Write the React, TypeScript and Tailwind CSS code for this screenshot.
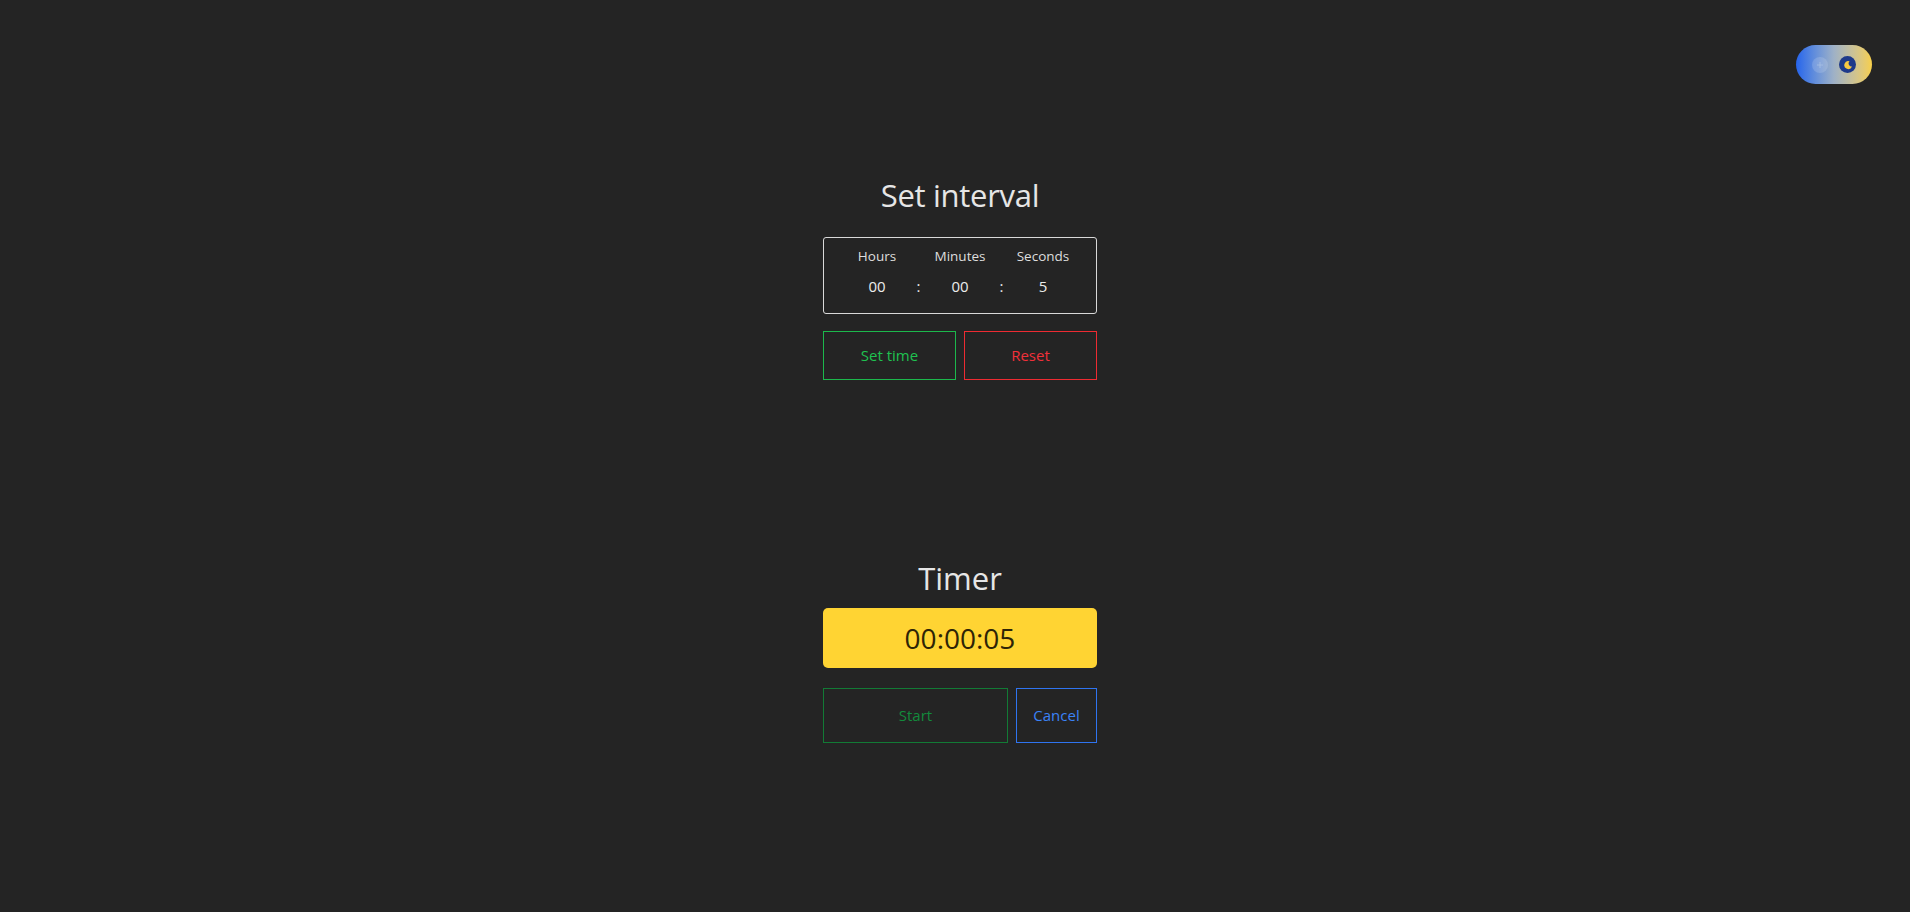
import { useState } from "react";

type Field = {
    label: string;
    value: string;
};

const fields: Field[] = [
    { label: "Hours", value: "00" },
    { label: "Minutes", value: "00" },
    { label: "Seconds", value: "5" },
];

function ThemeToggle() {
    return (
        <button
            type="button"
            aria-label="Toggle theme"
            className="absolute top-[45px] right-[38px] flex h-[39px] w-[76px] items-center justify-between rounded-full bg-gradient-to-r from-[#2563eb] via-[#9fb1c6] to-[#f7cf48] px-[16px]"
        >
            <span className="flex h-[16px] w-[16px] items-center justify-center rounded-full bg-white/15">
                <svg width="8" height="8" viewBox="0 0 8 8">
                    <path d="M4 1v6M1 4h6" stroke="#a9c0e4" strokeWidth="1" strokeOpacity="0.8" />
                </svg>
            </span>
            <span className="flex h-[17px] w-[17px] items-center justify-center rounded-full bg-[#1e3a8a]">
                <svg width="10" height="10" viewBox="0 0 10 10">
                    <path d="M6.5 1.2A4 4 0 1 0 9 6.6 3.2 3.2 0 0 1 6.5 1.2Z" fill="#f7c843" />
                </svg>
            </span>
        </button>
    );
}

export default function App() {
    const [time] = useState("00:00:05");

    return (
        <div className="relative min-h-[912px] w-full bg-[#242424] font-['Open_Sans',sans-serif] text-[#e3e3e3]">
            <ThemeToggle />

            <main className="ml-[10px] flex flex-col items-center pt-[175px]">
                <section className="flex w-[274px] flex-col">
                    <h1 className="text-center text-[31px] leading-[40px] tracking-[-0.3px] text-[#e6e6e6]">Set interval</h1>

                    <div className="mt-[22px] flex h-[77px] justify-center rounded-[3px] border border-[#d9d9d9] pt-[8px]">
                        {fields.map((field, index) => (
                            <div key={field.label} className="flex">
                                {index > 0 && (
                                    <div className="flex w-[23px] flex-col items-center">
                                        <span className="h-[20px]" />
                                        <span className="mt-[8px] text-[15px] leading-[24px]">:</span>
                                    </div>
                                )}
                                <div className="flex w-[60px] flex-col items-center">
                                    <span className="text-[13.5px] leading-[20px] text-[#dedede]">{field.label}</span>
                                    <span className="mt-[8px] text-[15px] leading-[24px] text-[#ececec]">{field.value}</span>
                                </div>
                            </div>
                        ))}
                    </div>

                    <div className="mt-[17px] flex gap-[8px]">
                        <button type="button" className="h-[49px] flex-1 border border-[#1cb84c] text-[15px] text-[#1fc150]">
                            Set time
                        </button>
                        <button type="button" className="h-[49px] flex-1 border border-[#ee2b32] text-[15px] text-[#f0303a]">
                            Reset
                        </button>
                    </div>
                </section>

                <section className="mt-[178px] flex w-[274px] flex-col">
                    <h2 className="text-center text-[31px] leading-[40px] text-[#e6e6e6]">Timer</h2>

                    <div className="mt-[10px] flex h-[60px] items-center justify-center rounded-[5px] bg-[#ffd433] text-[28px] text-[#2e2406]">
                        {time}
                    </div>

                    <div className="mt-[20px] flex gap-[8px]">
                        <button type="button" className="h-[55px] w-[185px] border border-[#127a35] text-[15px] text-[#138a3c]">
                            Start
                        </button>
                        <button type="button" className="h-[55px] flex-1 border border-[#2f74f0] text-[15px] text-[#3b82f6]">
                            Cancel
                        </button>
                    </div>
                </section>
            </main>
        </div>
    );
}
